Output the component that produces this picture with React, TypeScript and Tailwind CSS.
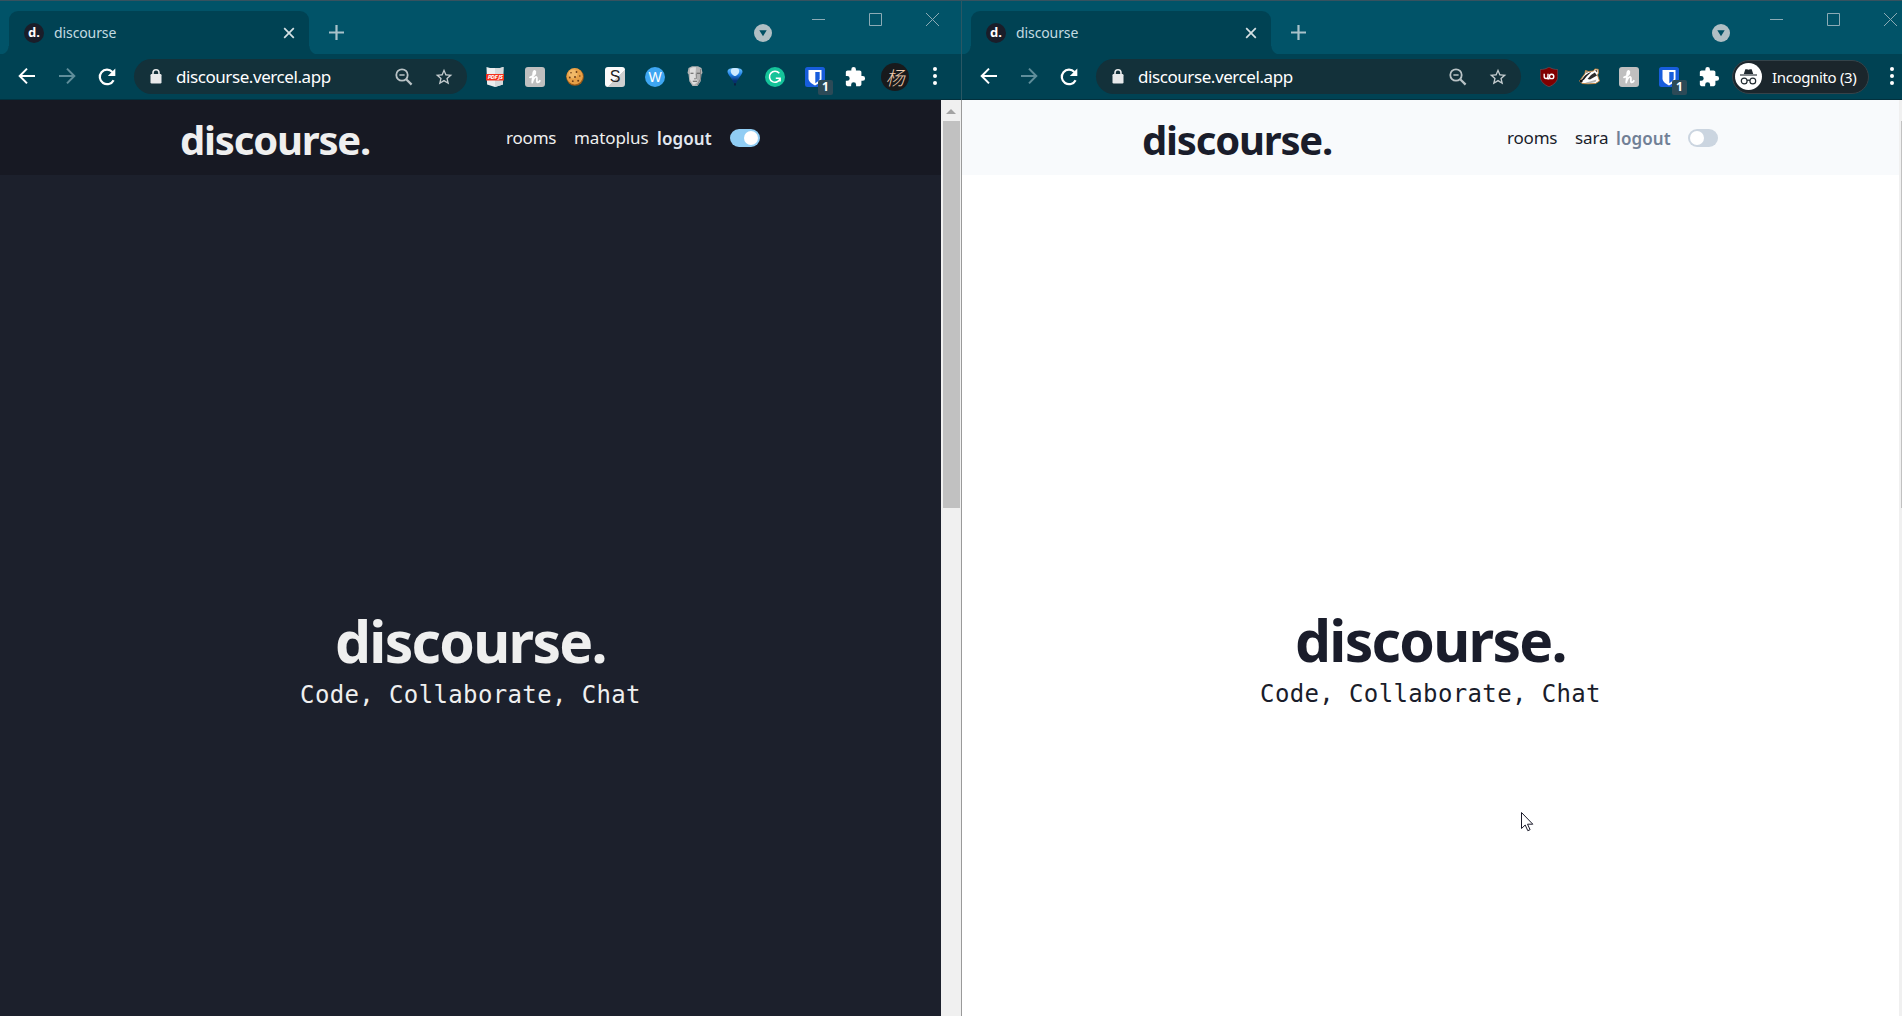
import React from 'react';

const ui = "font-['Noto_Sans','Open_Sans',sans-serif]";

function Cell({ children }: { children: React.ReactNode }) {
  return <div className="flex h-full w-10 shrink-0 items-center justify-center">{children}</div>;
}

function Back() {
  return (
    <svg width="18" height="18" viewBox="0 0 18 18" className="mb-px block" fill="none" stroke="#fff" strokeWidth="2">
      <path d="M17 9H2M9 1.600 1.700 9 9 16.400" />
    </svg>
  );
}

function Forward() {
  return (
    <svg width="18" height="18" viewBox="0 0 18 18" className="mb-px block" fill="none" stroke="#5f8e9b" strokeWidth="2">
      <path d="M1 9h15M9 1.600 16.300 9 9 16.400" />
    </svg>
  );
}

function Reload() {
  return (
    <svg width="20" height="20" viewBox="0 0 20 20" className="block" fill="none">
      <path d="M16.600 13.200A7.300 7.300 0 1 1 15.400 4.900" stroke="#fff" strokeWidth="2.200" />
      <path d="M18.300 1.400V9H10.800Z" fill="#fff" />
    </svg>
  );
}

function Lock() {
  return (
    <svg width="12" height="15" viewBox="0 0 12 15" className="block shrink-0">
      <rect x="0.500" y="5" width="11" height="9.500" rx="1.200" fill="#e8eaeb" />
      <path d="M3 6V3.800a3 3 0 0 1 6 0V6" fill="none" stroke="#e8eaeb" strokeWidth="1.600" />
    </svg>
  );
}

function ZoomOut() {
  return (
    <svg width="18" height="18" viewBox="0 0 18 18" className="block" fill="none" stroke="#b9c3c6">
      <circle cx="7" cy="7" r="5.700" strokeWidth="1.800" />
      <path d="M4.400 7h5.200" strokeWidth="1.500" />
      <path d="m11.200 11.200 5.400 5.400" strokeWidth="2.200" />
    </svg>
  );
}

function Star() {
  return (
    <svg width="20" height="20" viewBox="0 0 24 24" className="block" fill="#c3cbce">
      <path d="m22 9.240-7.190-.62L12 2 9.190 8.630 2 9.240l5.460 4.730L5.820 21 12 17.270 18.180 21l-1.630-7.030L22 9.240zM12 15.400l-3.760 2.270 1-4.280-3.320-2.880 4.380-.38L12 6.100l1.710 4.040 4.380.38-3.320 2.880 1 4.280L12 15.400z" />
    </svg>
  );
}

function PdfJs() {
  return (
    <div className="relative flex h-5 w-[18px] items-center justify-center">
      <svg width="18" height="20" viewBox="0 0 18 20" className="absolute inset-0">
        <path d="M0.500 0 4 1h10l3.500-1-.6 17.500L9 20l-7.900-2.500Z" fill="#eceeef" />
        <path d="M9 1h5l3.500-1-.6 17.500L9 20Z" fill="#d5d9db" />
        <path d="M0 7h18v6.500H0Z" fill="#f3301b" />
      </svg>
      <span className="relative mt-px text-[6px] leading-none font-bold tracking-[-0.5px] whitespace-nowrap text-white italic">PDF JS</span>
    </div>
  );
}

function Honey() {
  return (
    <div className="flex h-5 w-5 items-center justify-center rounded-[3px] bg-[#bfbfbf]">
      <svg width="14" height="16" viewBox="0 0 14 16" fill="none" stroke="#fff" strokeWidth="1.800" strokeLinecap="round" strokeLinejoin="round">
        <path d="M2 8.300C5.500 7.300 7.800 4.600 7.300 2.600 6.800 1.300 5.600 2 5.300 4L4.200 13.500C5 10 7 7.500 8.500 8 9.800 8.600 8 12.300 9.300 13.200 10.200 13.700 11.300 12.800 11.800 11.800" />
      </svg>
    </div>
  );
}

function Cookie() {
  return (
    <svg width="18" height="18" viewBox="0 0 18 18" className="block">
      <circle cx="9" cy="9" r="8.800" fill="#9c5a17" />
      <circle cx="8.700" cy="8.300" r="8.200" fill="#e6a047" />
      <circle cx="7" cy="6" r="4.500" fill="#f1b967" />
      <g fill="#6b3d17">
        <circle cx="5" cy="4.800" r=".8" />
        <circle cx="10.500" cy="4" r=".9" />
        <circle cx="3.800" cy="9.500" r=".9" />
        <circle cx="9" cy="9" r="1" />
        <circle cx="13.800" cy="8" r=".8" />
        <circle cx="6.800" cy="13.200" r=".9" />
        <circle cx="12.200" cy="12.800" r="1" />
      </g>
    </svg>
  );
}

function Mask() {
  return (
    <svg width="16" height="21" viewBox="0 0 16 21" className="block">
      <path d="M1.500 2 5 .3h6L14.500 2l1 5-1 1.200-.8 7L10.500 20h-5L2.300 15.200l-.8-7L.5 7Z" fill="#b4b4b4" />
      <path d="M3 2.500 6 1.200h3L8.500 8l1 4.500 1.500 3-3.500 3H6l-3-5Z" fill="#dedede" />
      <path d="M3.500 7.300h3M9.500 7.300h3.500M5.800 15.300h4.400" stroke="#5a5a5a" strokeWidth="1.100" />
      <path d="M9.300 8v4.800H7M13.500 3v10l-3 6" stroke="#858585" strokeWidth="1" fill="none" />
    </svg>
  );
}

function Balloon() {
  return (
    <svg width="18" height="20" viewBox="0 0 18 20" className="block">
      <defs>
        <linearGradient id="balloon" x1="0" y1="0" x2="0" y2="1">
          <stop offset="0" stopColor="#6cc4ff" />
          <stop offset="0.450" stopColor="#2080e8" />
          <stop offset="0.850" stopColor="#063070" />
        </linearGradient>
      </defs>
      <path d="M9 1c4.500 0 7.500 1 7.500 3.600C16.500 7.500 12 11.500 10.300 16H7.700C6 11.500 1.500 7.500 1.500 4.600 1.500 2 4.500 1 9 1Z" fill="url(#balloon)" />
      <path d="M9 1c3 0 4.500 1 4.200 3.500C13 6.800 10.500 9 9 9S5 6.800 4.800 4.500C4.500 2 6 1 9 1Z" fill="#cfeaff" />
      <rect x="8" y="16.300" width="2" height="2.200" fill="#0b1e40" />
    </svg>
  );
}

function Grammarly() {
  return (
    <svg width="20" height="20" viewBox="0 0 20 20" className="block">
      <circle cx="10" cy="10" r="10" fill="#15c39a" />
      <path d="M14.300 6.300A5.500 5.500 0 1 0 15.300 11.200M10.800 11.200h4.300v3.400" fill="none" stroke="#fff" strokeWidth="1.600" />
    </svg>
  );
}

function Bitwarden() {
  return (
    <div className="relative h-5 w-5">
      <svg width="20" height="20" viewBox="0 0 20 20" className="block">
        <rect width="20" height="20" rx="2.500" fill="#175ddc" />
        <path d="M3.500 3h13v8.500c0 3-3 5.200-6.500 7-3.500-1.800-6.500-4-6.500-7Z" fill="#fff" />
        <path d="M10.300 5h4.400v6.300c0 2-1.900 3.500-4.400 4.900Z" fill="#175ddc" />
      </svg>
      <div className="absolute top-[13px] left-[13px] flex h-[15px] w-[15px] items-center justify-center rounded-[2px] bg-[#2c4a57] text-[12px] leading-none font-bold text-white">1</div>
    </div>
  );
}

function Puzzle() {
  return (
    <svg width="22" height="22" viewBox="0 0 24 24" className="block" fill="#fff">
      <path d="M20.500 11H19V7c0-1.100-.9-2-2-2h-4V3.500a2.500 2.500 0 0 0-5 0V5H4c-1.100 0-2 .9-2 2v3.800h1.500a2.700 2.700 0 0 1 0 5.400H2V20c0 1.100.9 2 2 2h3.800v-1.500a2.700 2.700 0 0 1 5.400 0V22H17c1.100 0 2-.9 2-2v-4h1.500a2.500 2.500 0 0 0 0-5z" />
    </svg>
  );
}

function Dots() {
  return (
    <div className="mb-px flex flex-col gap-[3px]">
      <span className="h-1 w-1 rounded-full bg-white" />
      <span className="h-1 w-1 rounded-full bg-white" />
      <span className="h-1 w-1 rounded-full bg-white" />
    </div>
  );
}

function UBlock() {
  return (
    <svg width="18" height="20" viewBox="0 0 18 20" className="block">
      <path d="M9 0c2.500 1.800 5.500 2.500 8.700 2.500V9.500c0 5-3.700 8-8.700 10.300C4 17.500.3 14.500.3 9.500v-7C3.500 2.500 6.500 1.800 9 0Z" fill="#800000" stroke="#6f5560" strokeWidth="0.600" />
      <path d="M4.200 6.800v2.800a1.900 1.900 0 0 0 3.800 0v-2.800M8 9.500v2.300h1.500" fill="none" stroke="#fff" strokeWidth="1.400" />
      <circle cx="11.600" cy="9.400" r="2.200" fill="none" stroke="#fff" strokeWidth="1.400" />
    </svg>
  );
}

function Badger() {
  return (
    <svg width="21" height="17" viewBox="0 0 21 17" className="block">
      <path d="M.5 13 3.500 9 6 5.500 6.500 2.500 9.500 3.500 14.500 3 15.800 1l3.400.3.300 3.500-1 2.200L20.500 13l-4 2.500L9 15.800 3 15.500Z" fill="#fff" stroke="#c98238" strokeWidth="0.900" />
      <path d="M2 12.500 6 7.500 9.500 5l3-1.200L8 8l-3 3.800-2.500 1.500Z" fill="#1d1d1d" />
      <path d="M8.500 11 12 7l3.800-2.500 2.200 3-3.500 2-3.500 2Z" fill="#2c2c2c" />
      <path d="m16 2.200 2.200.1v2.200ZM7.300 3.300l1.700.7-1.500 1Z" fill="#3a2414" />
      <path d="M6 14.800 11 13.500l6.500-2-1 2.500-6 1.300Z" fill="#b5b5b5" />
      <circle cx="2.200" cy="13" r="1.500" fill="#111" />
    </svg>
  );
}

function Incognito() {
  return (
    <div className="flex h-[27px] w-[27px] items-center justify-center rounded-full bg-white">
      <svg width="19" height="18" viewBox="0 0 19 18" fill="none">
        <path d="M4.800 6 6.300 1.300h1.700L9.500 1.800 11 1.300h1.700L14.200 6Z" fill="#202a30" />
        <path d="M1 7h17" stroke="#5b6267" strokeWidth="1.500" />
        <circle cx="5.200" cy="13" r="2.900" stroke="#202a30" strokeWidth="1.200" />
        <circle cx="13.800" cy="13" r="2.900" stroke="#202a30" strokeWidth="1.200" />
        <path d="M8 12.600c.8-.6 2.200-.6 3 0" stroke="#202a30" strokeWidth="1.200" />
      </svg>
    </div>
  );
}

function TabStrip({ caretGap }: { caretGap: string }) {
  return (
    <div className="flex h-[54px] shrink-0 border-t border-[#37525f] bg-[#015368]">
      <div className="h-2 w-[9px] shrink-0 self-end bg-[radial-gradient(circle_at_0_0,#015368_8px,#004253_9px)]" />
      <div className="mt-2.5 flex w-[300px] shrink-0 items-center rounded-t-[9px] bg-[#004253] pr-3.5 pl-[15px]">
        <div className="flex h-5 w-5 items-center justify-center rounded-full bg-[#1a1d29] pb-px text-[13px] leading-none font-bold text-white">d.</div>
        <span className="ml-2.5 text-[14px] leading-5 tracking-[-0.100px] text-[#c3dbe1]">discourse</span>
        <svg width="12" height="12" viewBox="0 0 12 12" className="ml-auto" stroke="#d5e1e4" strokeWidth="1.700">
          <path d="m1.200 1.200 9.600 9.600M10.800 1.200 1.200 10.800" />
        </svg>
      </div>
      <div className="h-2 w-[9px] shrink-0 self-end bg-[radial-gradient(circle_at_100%_0,#015368_8px,#004253_9px)]" />
      <div className="mt-2.5 flex w-9 shrink-0 items-center justify-center">
        <svg width="15" height="15" viewBox="0 0 15 15" stroke="#a9c2ca" strokeWidth="2.200">
          <path d="M7.500 0v15M0 7.500h15" />
        </svg>
      </div>
      <div className={`${caretGap} mt-2.5 flex w-[18px] shrink-0 items-center`}>
        <svg width="18" height="18" viewBox="0 0 18 18">
          <circle cx="9" cy="9" r="9" fill="#b0bfc4" />
          <path d="M5.300 6.300h7.400L9 12.300Z" fill="#014f63" />
        </svg>
      </div>
      <div className="ml-[18px] grid h-[37px] w-[171px] shrink-0 grid-cols-3 place-items-center">
        <svg width="13" height="13" viewBox="0 0 13 13" stroke="#8cabb5"><path d="M0 6.500h13" /></svg>
        <svg width="13" height="13" viewBox="0 0 13 13" fill="none" stroke="#8cabb5"><path d="M.5.5h12v12H.5Z" /></svg>
        <svg width="13" height="13" viewBox="0 0 13 13" stroke="#8cabb5"><path d="m0 0 13 13M13 0 0 13" /></svg>
      </div>
    </div>
  );
}

function Toolbar({ boxWidth, children }: { boxWidth: string; children: React.ReactNode }) {
  return (
    <div className="flex h-[46px] shrink-0 items-center border-b border-[#02303d] bg-[#004253] pl-[7px]">
      <Cell><Back /></Cell>
      <Cell><Forward /></Cell>
      <Cell><Reload /></Cell>
      <div className={`${boxWidth} mr-2 ml-[7px] flex h-[35px] shrink-0 items-center rounded-full bg-[#13313a] pr-[3px] pl-4`}>
        <Lock />
        <span className="ml-3.5 text-[17px] leading-6 tracking-[-0.430px] text-white">discourse.vercel.app</span>
        <div className="ml-auto flex h-full">
          <Cell><ZoomOut /></Cell>
          <Cell><Star /></Cell>
        </div>
      </div>
      {children}
    </div>
  );
}

type SiteProps = { dark?: boolean; user: string };

function Site({ dark, user }: SiteProps) {
  return (
    <div className={`flex min-w-0 grow flex-col ${dark ? 'bg-[#1c202c] text-[#efefef]' : 'bg-white text-[#1a1d2b]'}`}>
      <header className={`flex h-[75px] shrink-0 ${dark ? 'bg-[#171923] pl-[180px]' : 'bg-[#f8fafc] pl-[180px]'}`}>
        <div className={`${dark ? 'w-[326px]' : 'w-[365px]'} shrink-0 pt-[13px] text-[40px] leading-[54px] font-bold tracking-[-1.200px]`}>discourse.</div>
        <nav className="flex h-[75px] items-start pt-[26px] text-[17px] leading-6 whitespace-nowrap">
          <span className="w-[68px] tracking-[-0.200px]">rooms</span>
          <span className={`${dark ? 'w-[83px]' : 'w-[41px]'} tracking-[-0.100px]`}>{user}</span>
          <span className={`${dark ? 'w-[73px]' : 'w-[72px]'} pt-px font-semibold tracking-[0.100px] ${dark ? 'text-[#e2e8f0]' : 'text-[#718096]'}`}>logout</span>
          <span className={`mt-[3px] flex h-[18px] w-[30px] rounded-full p-0.5 ${dark ? 'justify-end bg-[#90cdf4]' : 'bg-[#cbd5e0]'}`}>
            <span className="h-3.5 w-3.5 rounded-full bg-white" />
          </span>
        </nav>
      </header>
      <main className={`flex flex-col items-center ${dark ? 'pt-[429px]' : 'pt-[428px]'}`}>
        <h1 className="text-[57px] leading-[75px] font-bold tracking-[-1.700px]">discourse.</h1>
        <p className="font-['DejaVu_Sans_Mono',monospace] text-[24px] leading-8 tracking-[0.370px] whitespace-pre">Code, Collaborate, Chat</p>
      </main>
    </div>
  );
}

function Scrollbar() {
  return (
    <div className="flex w-5 shrink-0 flex-col items-center bg-[#f0f0f0]">
      <div className="flex h-[21px] items-center justify-center pt-0.5">
        <svg width="10" height="5" viewBox="0 0 10 5"><path d="M5 0l5 5H0Z" fill="#a3a3a3" /></svg>
      </div>
      <div className="h-[387px] w-[17px] bg-[#c1c1c1]" />
    </div>
  );
}

export default function App() {
  return (
    <div className={`relative flex h-[1016px] w-[1902px] overflow-hidden ${ui}`}>
      <section className="flex w-[961px] shrink-0 flex-col overflow-hidden">
        <TabStrip caretGap="ml-[400px]" />
        <Toolbar boxWidth="w-[333px]">
          <Cell><PdfJs /></Cell>
          <Cell><Honey /></Cell>
          <Cell><Cookie /></Cell>
          <Cell>
            <div className="flex h-5 w-5 items-center justify-center rounded-[3px] bg-[linear-gradient(135deg,#fafafa_55%,#cfcfcf_56%)] font-['Liberation_Sans',sans-serif] text-[16px] leading-none text-[#222]">S</div>
          </Cell>
          <Cell>
            <div className="flex h-5 w-5 items-center justify-center rounded-full bg-[#3ea6f2] font-['Liberation_Sans',sans-serif] text-[14px] leading-none text-white">W</div>
          </Cell>
          <Cell><Mask /></Cell>
          <Cell><Balloon /></Cell>
          <Cell><Grammarly /></Cell>
          <Cell><Bitwarden /></Cell>
          <Cell><Puzzle /></Cell>
          <Cell>
            <div className="flex h-7 w-7 items-center justify-center rounded-full bg-[#181a1c] font-['Noto_Sans_CJK_SC',sans-serif] text-[19px] leading-none font-light text-[#f0cdb0] italic">杨</div>
          </Cell>
          <Cell><Dots /></Cell>
        </Toolbar>
        <div className="flex grow">
          <Site dark user="matoplus" />
          <Scrollbar />
        </div>
      </section>
      <div className="flex w-px shrink-0 flex-col">
        <div className="h-[100px] bg-[#2a5764]" />
        <div className="grow bg-[#9a9a9a]" />
      </div>
      <section className="flex w-[940px] shrink-0 flex-col overflow-hidden">
        <TabStrip caretGap="ml-[396px]" />
        <Toolbar boxWidth="w-[425px]">
          <Cell><UBlock /></Cell>
          <Cell><Badger /></Cell>
          <Cell><Honey /></Cell>
          <Cell><Bitwarden /></Cell>
          <Cell><Puzzle /></Cell>
          <div className="mr-[3px] ml-[3px] flex h-[34px] w-[137px] shrink-0 items-center rounded-full border border-[#34434a] bg-[#1b262c] pl-0.5">
            <Incognito />
            <span className="ml-2.5 text-[15px] leading-5 tracking-[-0.350px] whitespace-nowrap text-white">Incognito (3)</span>
          </div>
          <Cell><Dots /></Cell>
        </Toolbar>
        <div className="flex grow">
          <Site user="sara" />
          <div className="w-[3px] shrink-0 bg-[#f0f0f0] pt-[21px] pl-0.5">
            <div className="h-[387px] bg-[#c1c1c1]" />
          </div>
        </div>
      </section>
      <svg width="13" height="20" viewBox="0 0 13 20" className="absolute top-[812px] left-[1521px]">
        <path d="M.5.500V16.500L4.200 13l2.600 5.700 2.300-1L6.500 12.200h5.300Z" fill="#fff" stroke="#1a1a2a" strokeWidth="1" />
      </svg>
    </div>
  );
}
